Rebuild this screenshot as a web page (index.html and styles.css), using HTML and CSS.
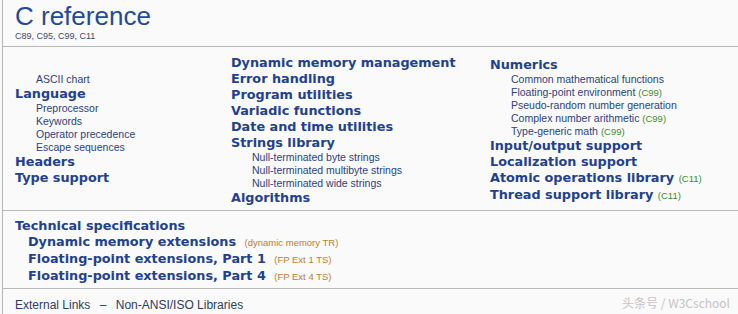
FILE: index.html
```html
<!DOCTYPE html>
<html lang="en">
<head>
    <meta charset="UTF-8">
    <title>C reference</title>
    <link rel="stylesheet" href="styles.css">
</head>
<body>
    <div class="page">
        <div class="header">
            <div class="title">C reference</div>
            <div class="subtitle">C89, C95, C99, C11</div>
        </div>

        <div class="columns">
            <div class="col col-1">
                <div class="sub">ASCII chart</div>
                <div class="head">Language</div>
                <div class="sub">Preprocessor</div>
                <div class="sub">Keywords</div>
                <div class="sub">Operator precedence</div>
                <div class="sub">Escape sequences</div>
                <div class="head">Headers</div>
                <div class="head">Type support</div>
            </div>
            <div class="col col-2">
                <div class="head">Dynamic memory management</div>
                <div class="head">Error handling</div>
                <div class="head">Program utilities</div>
                <div class="head">Variadic functions</div>
                <div class="head">Date and time utilities</div>
                <div class="head">Strings library</div>
                <div class="sub">Null-terminated byte strings</div>
                <div class="sub">Null-terminated multibyte strings</div>
                <div class="sub">Null-terminated wide strings</div>
                <div class="head">Algorithms</div>
            </div>
            <div class="col col-3">
                <div class="head">Numerics</div>
                <div class="sub">Common mathematical functions</div>
                <div class="sub">Floating-point environment <span class="ver">(C99)</span></div>
                <div class="sub">Pseudo-random number generation</div>
                <div class="sub">Complex number arithmetic <span class="ver">(C99)</span></div>
                <div class="sub">Type-generic math <span class="ver">(C99)</span></div>
                <div class="head">Input/output support</div>
                <div class="head">Localization support</div>
                <div class="head">Atomic operations library <span class="ver">(C11)</span></div>
                <div class="head">Thread support library <span class="ver">(C11)</span></div>
            </div>
        </div>

        <div class="ts">
            <div class="head">Technical specifications</div>
            <div class="head ts-item">Dynamic memory extensions <span class="tr">(dynamic memory TR)</span></div>
            <div class="head ts-item">Floating-point extensions, Part 1 <span class="tr">(FP Ext 1 TS)</span></div>
            <div class="head ts-item">Floating-point extensions, Part 4 <span class="tr">(FP Ext 4 TS)</span></div>
        </div>

        <div class="footer">
            <span>External Links</span>
            <span class="dash">&ndash;</span>
            <span>Non-ANSI/ISO Libraries</span>
        </div>

        <div class="watermark">头条号 / W3Cschool</div>
    </div>
</body>
</html>
```

FILE: styles.css
```css
body, html {
    margin: 0;
    padding: 0;
    width: 100%;
    height: 100%;
    overflow: hidden;
    background-color: #f9f9f9;
}
.page {
    position: relative;
    margin-left: 2px;
    height: 100%;
    border-left: 1px solid #b4b4b4;
    background-color: #fafafa;
    font-family: "Liberation Sans", Arial, sans-serif;
}
.header {
    height: 47px;
    padding-left: 12px;
    border-bottom: 1px solid #b8b8b8;
    box-sizing: border-box;
}
.title {
    font-size: 26px;
    line-height: 30px;
    padding-top: 1px;
    color: #234b9b;
}
.subtitle {
    font-size: 9px;
    line-height: 10px;
    color: #3e4a66;
}

.columns {
    display: flex;
    height: 164px;
    padding-left: 12px;
    border-bottom: 1px solid #b8b8b8;
    box-sizing: border-box;
}
.col-1 {
    width: 216px;
    padding-top: 26px;
}
.col-2 {
    width: 259px;
    padding-top: 8px;
}
.col-3 {
    padding-top: 10px;
}

.head {
    font-family: "DejaVu Sans", Verdana, sans-serif;
    font-weight: bold;
    font-size: 12.8px;
    line-height: 16px;
    color: #1f4190;
    white-space: nowrap;
}
.sub {
    font-size: 10.5px;
    line-height: 13px;
    padding-left: 21px;
    color: #2b4280;
    white-space: nowrap;
}
.ver {
    font-family: "Liberation Sans", Arial, sans-serif;
    font-weight: normal;
    font-size: 9.5px;
    color: #3d8a2e;
}

.ts {
    height: 78px;
    padding: 7px 0 0 12px;
    box-sizing: border-box;
    border-bottom: 1px solid #b8b8b8;
}
.ts-item {
    padding-left: 13px;
}
.tr {
    font-family: "Liberation Sans", Arial, sans-serif;
    font-weight: normal;
    font-size: 9.5px;
    margin-left: 4px;
    color: #c47a2a;
}

.footer {
    padding: 9px 0 0 12px;
    font-size: 12px;
    line-height: 14px;
    color: #2d3d5f;
}
.dash {
    margin: 0 6px;
}

.watermark {
    position: absolute;
    right: 8px;
    bottom: 3px;
    font-family: "Noto Sans CJK SC", "Liberation Sans", sans-serif;
    font-size: 12px;
    color: #c4c4c4;
}
```
